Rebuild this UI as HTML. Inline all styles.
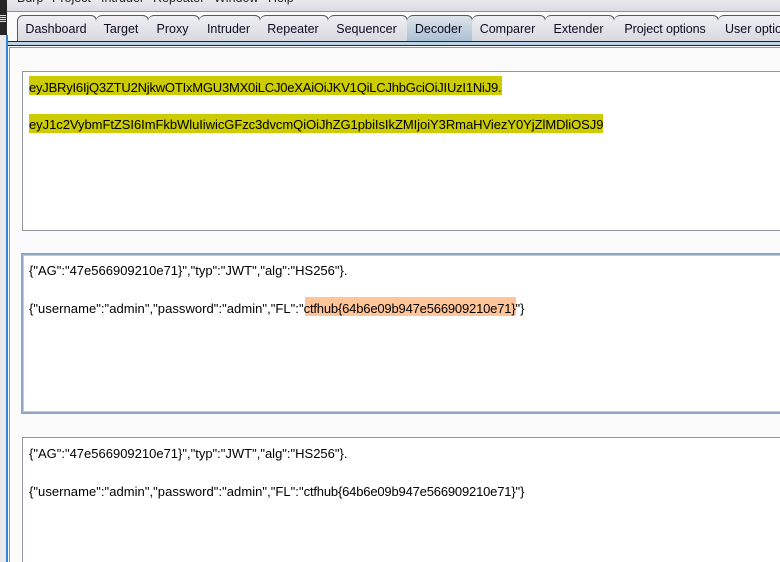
<!DOCTYPE html>
<html>
<head>
<meta charset="utf-8">
<style>
html,body{margin:0;padding:0;background:#f9f9f9}
#p{position:relative;width:780px;height:562px;overflow:hidden;background:#fbfbfb;font-family:"Liberation Sans",Arial,sans-serif;font-size:13px;color:#000}
#p div{position:absolute;box-sizing:border-box}
.t{top:15px;height:27px;border:1px solid #55585f;border-bottom:none;border-left:none;border-radius:6px 6px 0 0;background:linear-gradient(#eeeef2,#d8d9e0);font-size:12.5px;line-height:27px;text-align:center;color:#0c0c20;white-space:nowrap;overflow:hidden;padding-right:2px}
.l{left:29px;white-space:pre;height:19px;line-height:19px;font-size:13px}
.box{background:#fff;border:1px solid #94969f;width:790px}
.m{top:-9px;height:14px;line-height:14px;font-size:12.5px;white-space:pre;color:#222}
.a{letter-spacing:.045px}
.b{letter-spacing:-.18px}
</style>
</head>
<body>
<div id="p">
<div style="left:7px;top:0;width:773px;height:12px;background:linear-gradient(#e9e9ee,#dadbe1)"></div>
<div style="left:7px;top:11px;width:773px;height:1px;background:#8f9196"></div>
<div style="left:7px;top:12px;width:773px;height:30px;background:#fbfbfb"></div>
<div class="m" style="left:17px">Burp</div>
<div class="m" style="left:52px">Project</div>
<div class="m" style="left:101px">Intruder</div>
<div class="m" style="left:153px">Repeater</div>
<div class="m" style="left:214px">Window</div>
<div class="m" style="left:268px">Help</div>
<div style="left:0;top:0;width:7px;height:35px;background:#262626"></div>
<div style="left:0;top:15px;width:6px;height:7px;background:repeating-linear-gradient(#ddd 0 1px,#333 1px 2px)"></div>
<div style="left:0;top:35px;width:7px;height:527px;background:#e9e9ec"></div>
<div style="left:6px;top:35px;width:2px;height:527px;background:#2e86d6"></div>

<div class="t" style="left:17px;width:80px;border-left:1px solid #55585f">Dashboard</div>
<div class="t" style="left:96px;width:53px">Target</div>
<div class="t" style="left:148px;width:52px">Proxy</div>
<div class="t" style="left:199px;width:62px">Intruder</div>
<div class="t" style="left:260px;width:69px">Repeater</div>
<div class="t" style="left:328px;width:80px">Sequencer</div>
<div class="t" style="left:407px;width:66px;background:linear-gradient(#dfe4ea,#a9bfd3)">Decoder</div>
<div class="t" style="left:472px;width:74px">Comparer</div>
<div class="t" style="left:545px;width:70px">Extender</div>
<div class="t" style="left:614px;width:105px;letter-spacing:-.1px">Project options</div>
<div class="t" style="left:718px;width:90px;text-align:left;padding-left:7px">User options</div>

<div style="left:8px;top:41px;width:772px;height:5px;background:#bdd3e6;border-top:1px solid #20242c;border-bottom:1px solid #20242c"></div>
<div style="left:9px;top:47px;width:771px;height:515px;background:#fbfbfb;border-left:1px solid #94969f;border-top:1px solid #94969f"></div>

<div class="box" style="left:22px;top:71px;height:160px"></div>
<div style="left:29px;top:76px;width:473px;height:19px;background:#cccc00"></div>
<div style="left:29px;top:114px;width:574px;height:19px;background:#cccc00"></div>
<div class="l" style="top:78px;letter-spacing:-.21px">eyJBRyI6IjQ3ZTU2NjkwOTIxMGU3MX0iLCJ0eXAiOiJKV1QiLCJhbGciOiJIUzI1NiJ9.</div>
<div class="l" style="top:115px;letter-spacing:-.05px">eyJ1c2VybmFtZSI6ImFkbWluIiwicGFzc3dvcmQiOiJhZG1pbiIsIkZMIjoiY3RmaHViezY0YjZlMDliOSJ9</div>

<div class="box" style="left:21px;top:253px;height:161px;border:2px solid #8ea6c2;box-shadow:inset 0 0 0 1px #b9cfe4"></div>
<div style="left:305px;top:297px;width:211px;height:19px;background:#ffc599"></div>
<div class="l" style="top:261px">{"AG":"47e566909210e71}","typ":"JWT","alg":"HS256"}.</div>
<div class="l" style="top:299px"><span class="a">{"username":"admin","password":"admin","FL":"</span><span class="b">ctfhub{64b6e09b947e566909210e71}</span>"}</div>

<div class="box" style="left:22px;top:437px;height:140px"></div>
<div class="l" style="top:444px">{"AG":"47e566909210e71}","typ":"JWT","alg":"HS256"}.</div>
<div class="l" style="top:482px"><span class="a">{"username":"admin","password":"admin","FL":"</span><span class="b">ctfhub{64b6e09b947e566909210e71}</span>"}</div>
</div>
</body>
</html>
